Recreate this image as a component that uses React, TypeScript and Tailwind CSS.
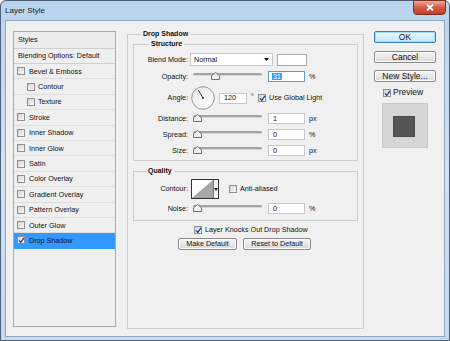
import React from "react";

function Check({ checked = false }: { checked?: boolean }) {
  return (
    <span className="relative inline-flex w-[8px] h-[8px] shrink-0 border border-[#8e8f8f] bg-linear-to-br from-[#d4d4d4] to-[#fbfbfb]">
      {checked && (
        <svg className="absolute left-0 top-0" width="7" height="7" viewBox="0 0 7 7">
          <path d="M1 3.4 L2.8 5.4 L6 0.8" fill="none" stroke="#1c3f94" strokeWidth="1.3" />
        </svg>
      )}
    </span>
  );
}

function Slider({ pos }: { pos: number }) {
  return (
    <div className="relative w-[69px] h-[11px]">
      <div className="absolute left-0 right-0 top-[2px] h-[3px] rounded-full bg-[#a3a3a3] border-b border-[#d8d8d8]" />
      <svg className="absolute top-[1px]" style={{ left: pos - 4 }} width="9" height="8" viewBox="0 0 9 8">
        <path d="M4.5 0.5 L8.5 3.8 L8.5 7.5 L0.5 7.5 L0.5 3.8 Z" fill="#f2f2f2" stroke="#6f6f6f" strokeWidth="1" />
      </svg>
    </div>
  );
}

function Label({ children }: { children: React.ReactNode }) {
  return <div className="w-[54px] text-right leading-none shrink-0">{children}</div>;
}

function NumInput({ value, w = 37, focused = false }: { value: string; w?: number; focused?: boolean }) {
  return (
    <div
      className={
        "h-[11px] bg-white flex items-center pl-[4px] leading-none border " +
        (focused ? "border-[#5b9bd5]" : "border-[#c5c8ce]")
      }
      style={{ width: w }}
    >
      {focused ? <span className="bg-[#3399ff] text-white px-[1px] -ml-[1px]">{value}</span> : value}
    </div>
  );
}

function SliderRow({ label, pos, value, unit, mt }: { label: string; pos: number; value: string; unit: string; mt: string }) {
  return (
    <div className={"flex items-center h-[11px] " + mt}>
      <Label>{label}</Label>
      <div className="ml-[5px]">
        <Slider pos={pos} />
      </div>
      <div className="ml-[6px]">
        <NumInput value={value} focused={value === "31"} />
      </div>
      <span className="ml-[4px] leading-none">{unit}</span>
    </div>
  );
}

function Btn({ children, w, primary = false, cls = "" }: { children: React.ReactNode; w: number; primary?: boolean; cls?: string }) {
  return (
    <div
      className={
        "h-[12px] rounded-[2px] flex items-center justify-center leading-none border " +
        (primary
          ? "border-[#3c7fb1] bg-linear-to-b from-[#eaf6fd] to-[#bee6fd] shadow-[inset_0_0_0_1px_#a7d9f5] "
          : "border-[#8a8a8a] bg-linear-to-b from-[#f6f6f6] to-[#d9d9d9] shadow-[inset_0_0_0_1px_#fcfcfc] ") +
        cls
      }
      style={{ width: w }}
    >
      {children}
    </div>
  );
}

const styleRows: { name: string; indent?: boolean; checked?: boolean; selected?: boolean }[] = [
  { name: "Bevel & Emboss" },
  { name: "Contour", indent: true },
  { name: "Texture", indent: true },
  { name: "Stroke" },
  { name: "Inner Shadow" },
  { name: "Inner Glow" },
  { name: "Satin" },
  { name: "Color Overlay" },
  { name: "Gradient Overlay" },
  { name: "Pattern Overlay" },
  { name: "Outer Glow" },
  { name: "Drop Shadow", checked: true, selected: true },
];

export default function App() {
  return (
    <div className="w-[450px] h-[341px] overflow-hidden bg-white font-['Liberation_Sans',Arial,sans-serif] text-[#111]">
      <div className="w-full h-full flex flex-col rounded-t-[6px] border border-[#4e6075] bg-linear-to-b from-[#b9d4ef] via-[#cfe2f6] to-[#c3daf2]">
        {/* Title bar */}
        <div className="h-[19px] flex items-center shrink-0">
          <span className="pl-[4px] text-[8px] leading-none text-[#1a1a1a]">Layer Style</span>
          <div className="ml-auto mr-[3px] self-start -mt-px w-[33px] h-[15px] rounded-b-[4px] border border-[#7a2f22] bg-linear-to-b from-[#e9a999] via-[#d35a43] to-[#c23d27] flex items-center justify-center">
            <svg width="8" height="7" viewBox="0 0 8 7">
              <path d="M1 0.5 L7 6.5 M7 0.5 L1 6.5" stroke="#ffffff" strokeWidth="1.8" />
            </svg>
          </div>
        </div>

        {/* Client area */}
        <div className="mx-[4px] h-[317px] shrink-0 border border-[#90a6bd] bg-[#f0f0f0] flex items-start text-[7.2px]">
          {/* Styles panel */}
          <div className="ml-[7px] mt-[10px] w-[103px] h-[296px] border border-[#ababab] bg-[#efefef] flex flex-col shrink-0">
            <div className="h-[17px] shrink-0 flex items-center pl-[4px] border-b border-[#cfcfcf] bg-[#ececec] leading-none">Styles</div>
            <div className="h-[15px] shrink-0 flex items-center pl-[4px] border-b border-[#cfcfcf] leading-none">Blending Options: Default</div>
            {styleRows.map((r) => (
              <div
                key={r.name}
                className={
                  "h-[15.4px] shrink-0 flex items-center leading-none border-b " +
                  (r.selected ? "bg-[#3399ff] border-[#3399ff]" : "border-[#dedede]") +
                  (r.indent ? " pl-[13px]" : " pl-[3px]")
                }
              >
                <Check checked={r.checked} />
                <span className={r.indent ? "ml-[3px]" : "ml-[4px]"}>{r.name}</span>
              </div>
            ))}
          </div>

          {/* Main group */}
          <fieldset className="ml-[11px] mt-[8px] w-[237px] h-[300px] shrink-0 border border-[#cdcdcd] px-[5px]">
            <legend className="ml-[8px] px-[2px] font-bold text-[7px] leading-[10px]">Drop Shadow</legend>

            <fieldset className="border border-[#cdcdcd]">
              <legend className="ml-[15px] px-[2px] font-bold text-[7px] leading-[10px]">Structure</legend>

              <div className="flex items-center h-[13px] mt-[4px]">
                <Label>Blend Mode:</Label>
                <div className="ml-[2px] w-[83px] h-[13px] bg-white border border-[#c5c8ce] flex items-center pl-[3px] leading-none">
                  <span>Normal</span>
                  <svg className="ml-auto mr-[3px]" width="5" height="3" viewBox="0 0 5 3">
                    <path d="M0 0 L5 0 L2.5 3 Z" fill="#000" />
                  </svg>
                </div>
                <div className="ml-[4px] w-[30px] h-[12px] bg-white border border-[#a9a9a9]" />
              </div>

              <SliderRow label="Opacity:" pos={22} value="31" unit="%" mt="mt-[5px]" />

              <div className="flex items-center h-[24px] mt-[4px]">
                <Label>Angle:</Label>
                <svg className="ml-[3px] shrink-0" width="24" height="24" viewBox="0 0 24 24">
                  <defs>
                    <linearGradient id="dg" x1="0" y1="0" x2="1" y2="1">
                      <stop offset="0" stopColor="#e6e6e6" />
                      <stop offset="1" stopColor="#ffffff" />
                    </linearGradient>
                  </defs>
                  <circle cx="12" cy="12" r="11.3" fill="url(#dg)" stroke="#8c8c8c" strokeWidth="0.9" />
                  <path d="M12 12 L7.3 4" stroke="#333" strokeWidth="1" />
                  <circle cx="12" cy="12" r="1" fill="#333" />
                </svg>
                <div className="ml-[4px]">
                  <NumInput value="120" w={28} />
                </div>
                <span className="ml-[4px] w-[6px] leading-none -mt-[3px]">°</span>
                <div className="ml-[1px] flex items-center">
                  <Check checked />
                </div>
                <span className="ml-[3px] leading-none">Use Global Light</span>
              </div>

              <SliderRow label="Distance:" pos={4} value="1" unit="px" mt="mt-[3px]" />
              <SliderRow label="Spread:" pos={4} value="0" unit="%" mt="mt-[5px]" />
              <div className="pb-[4px]">
                <SliderRow label="Size:" pos={4} value="0" unit="px" mt="mt-[5px]" />
              </div>
            </fieldset>

            <fieldset className="mt-[5px] border border-[#cdcdcd]">
              <legend className="ml-[12px] px-[2px] font-bold text-[7px] leading-[10px]">Quality</legend>
              <div className="flex items-center h-[20px] mt-[3px]">
                <Label>Contour:</Label>
                <div className="ml-[3px] w-[28px] h-[20px] border border-[#333] bg-white flex shrink-0">
                  <svg width="21" height="18" viewBox="0 0 21 18">
                    <path d="M0 18 L21 0 L21 18 Z" fill="#a6a6a6" />
                  </svg>
                  <div className="flex-1 border-l border-[#777] bg-[#f4f4f4] flex items-center justify-center">
                    <svg width="4" height="3" viewBox="0 0 4 3">
                      <path d="M0 0 L4 0 L2 3 Z" fill="#000" />
                    </svg>
                  </div>
                </div>
                <div className="ml-[10px] flex items-center">
                  <Check />
                </div>
                <span className="ml-[3px] leading-none">Anti-aliased</span>
              </div>
              <div className="pb-[6px]">
                <SliderRow label="Noise:" pos={4} value="0" unit="%" mt="mt-[4px]" />
              </div>
            </fieldset>

            <div className="mt-[4px] h-[9px] pl-[61px] flex items-center">
              <Check checked />
              <span className="ml-[3px] leading-none">Layer Knocks Out Drop Shadow</span>
            </div>

            <div className="mt-[4px] pl-[45px] flex gap-[6px]">
              <Btn w={59}>Make Default</Btn>
              <Btn w={68}>Reset to Default</Btn>
            </div>
          </fieldset>

          {/* Right column */}
          <div className="ml-[10px] mt-[10px] w-[62px] flex flex-col shrink-0 text-[8.5px]">
            <Btn w={62} primary>OK</Btn>
            <Btn w={62} cls="mt-[8px]">Cancel</Btn>
            <Btn w={62} cls="mt-[7px]">New Style...</Btn>
            <div className="mt-[6px] h-[9px] pl-[9px] flex items-center">
              <Check checked />
              <span className="ml-[2px] leading-none">Preview</span>
            </div>
            <div className="mt-[6px] ml-[8px] w-[46px] h-[45px] bg-[#d6d6d6] border border-[#c9c9c9] pt-[12px] pl-[10px]">
              <div className="w-[22px] h-[21px] bg-[#555555] border border-[#4a4a4a]" />
            </div>
          </div>
        </div>
      </div>
    </div>
  );
}
